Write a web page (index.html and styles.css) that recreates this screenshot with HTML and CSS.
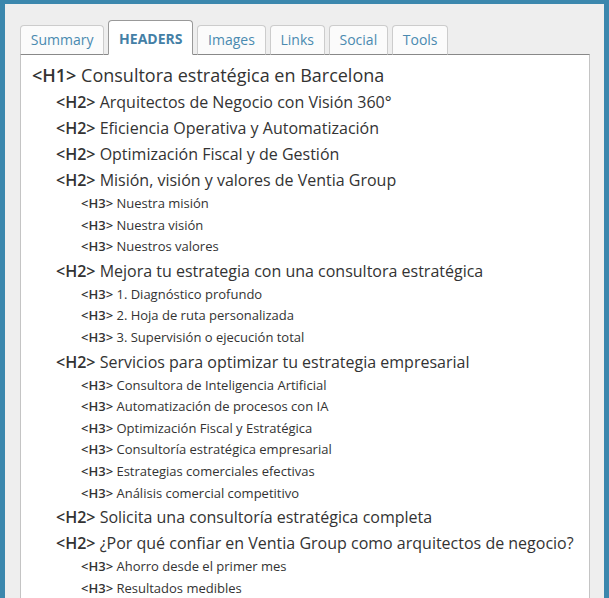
FILE: index.html
```html
<!DOCTYPE html>
<html lang="es">
<head>
<meta charset="utf-8">
<link rel="stylesheet" href="styles.css">
</head>
<body>
<div class="frame">
  <div class="panel">
    <div class="tabs">
      <div class="tab">Summary</div>
      <div class="tab active">HEADERS</div>
      <div class="tab">Images</div>
      <div class="tab">Links</div>
      <div class="tab">Social</div>
      <div class="tab">Tools</div>
    </div>
    <div class="content">
      <div class="h h1"><b>&lt;H1&gt;</b> Consultora estratégica en Barcelona</div>
      <div class="h h2"><b>&lt;H2&gt;</b> Arquitectos de Negocio con Visión 360°</div>
      <div class="h h2"><b>&lt;H2&gt;</b> Eficiencia Operativa y Automatización</div>
      <div class="h h2"><b>&lt;H2&gt;</b> Optimización Fiscal y de Gestión</div>
      <div class="h h2"><b>&lt;H2&gt;</b> Misión, visión y valores de Ventia Group</div>
      <div class="h h3"><b>&lt;H3&gt;</b> Nuestra misión</div>
      <div class="h h3"><b>&lt;H3&gt;</b> Nuestra visión</div>
      <div class="h h3"><b>&lt;H3&gt;</b> Nuestros valores</div>
      <div class="h h2"><b>&lt;H2&gt;</b> Mejora tu estrategia con una consultora estratégica</div>
      <div class="h h3"><b>&lt;H3&gt;</b> 1. Diagnóstico profundo</div>
      <div class="h h3"><b>&lt;H3&gt;</b> 2. Hoja de ruta personalizada</div>
      <div class="h h3"><b>&lt;H3&gt;</b> 3. Supervisión o ejecución total</div>
      <div class="h h2"><b>&lt;H2&gt;</b> Servicios para optimizar tu estrategia empresarial</div>
      <div class="h h3"><b>&lt;H3&gt;</b> Consultora de Inteligencia Artificial</div>
      <div class="h h3"><b>&lt;H3&gt;</b> Automatización de procesos con IA</div>
      <div class="h h3"><b>&lt;H3&gt;</b> Optimización Fiscal y Estratégica</div>
      <div class="h h3"><b>&lt;H3&gt;</b> Consultoría estratégica empresarial</div>
      <div class="h h3"><b>&lt;H3&gt;</b> Estrategias comerciales efectivas</div>
      <div class="h h3"><b>&lt;H3&gt;</b> Análisis comercial competitivo</div>
      <div class="h h2"><b>&lt;H2&gt;</b> Solicita una consultoría estratégica completa</div>
      <div class="h h2"><b>&lt;H2&gt;</b> ¿Por qué confiar en Ventia Group como arquitectos de negocio?</div>
      <div class="h h3"><b>&lt;H3&gt;</b> Ahorro desde el primer mes</div>
      <div class="h h3"><b>&lt;H3&gt;</b> Resultados medibles</div>
    </div>
  </div>
</div>
</body>
</html>
```

FILE: styles.css
```css
html, body {
  margin: 0;
  padding: 0;
  height: 100%;
  overflow: hidden;
}
body {
  background: #3b87ad;
  font-family: "Open Sans", "Noto Sans", sans-serif;
}
.frame {
  padding: 4px 5px 0 5px;
  height: 100%;
  box-sizing: border-box;
}
.panel {
  background: #eeeeee;
  height: 100%;
  box-sizing: border-box;
  padding: 16px 14px 0 15px;
  display: flex;
  flex-direction: column;
}
.tabs {
  display: flex;
  align-items: flex-end;
  gap: 4px;
  position: relative;
  z-index: 1;
  margin-bottom: -1px;
}
.tab {
  background: #fbfbfb;
  border: 1px solid #cccccc;
  border-bottom: 1px solid #888888;
  border-radius: 4px 4px 0 0;
  color: #4a8ab0;
  font-size: 14px;
  line-height: 28px;
  padding: 0 9.8px;
  box-sizing: border-box;
  height: 30px;
}
.tab.active {
  background: #ffffff;
  border-color: #999999;
  border-bottom-color: #ffffff;
  font-weight: 700;
  color: #4480a6;
  height: 35px;
  line-height: 36px;
}
.content {
  background: #ffffff;
  border: 1px solid #c4c4c4;
  border-top-color: #888888;
  border-bottom: none;
  padding: 6px 11px 0 11px;
  color: #333333;
  flex: 1;
  overflow: hidden;
}
.h {
  white-space: nowrap;
}
.h b {
  font-weight: 600;
}
.h1 {
  font-size: 18px;
  line-height: 28px;
}
.h2 {
  font-size: 16px;
  line-height: 26px;
  padding-left: 24px;
}
.h3 {
  font-size: 13px;
  line-height: 21.6px;
  padding-left: 49px;
}
```
